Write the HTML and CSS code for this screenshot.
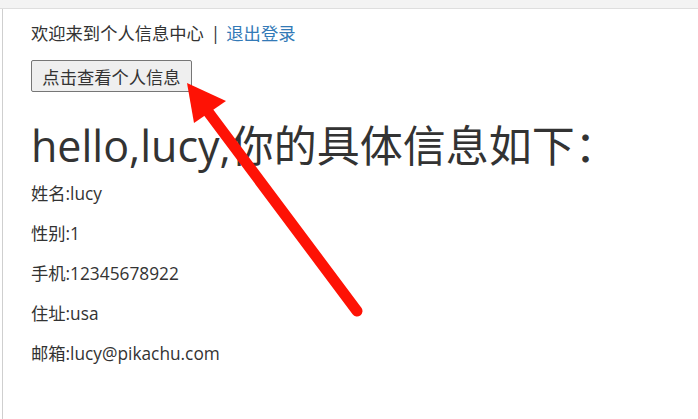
FILE: index.html
```html
<!DOCTYPE html>
<html>
<head>
<meta charset="utf-8">
<link rel="stylesheet" href="styles.css">
</head>
<body>
<div class="topbar"></div>
<div class="frame">
  <div class="content">
    <div class="welcome">欢迎来到个人信息中心<span class="sep">|</span><a class="link" href="#">退出登录</a></div>
    <button class="btn">点击查看个人信息</button>
    <h1 class="title">hello,lucy,你的具体信息如下：</h1>
    <p class="row">姓名:lucy</p>
    <p class="row">性别:1</p>
    <p class="row">手机:12345678922</p>
    <p class="row">住址:usa</p>
    <p class="row">邮箱:lucy@pikachu.com</p>
  </div>
  <svg class="arrow" width="698" height="419" viewBox="0 0 698 419">
    <line x1="357" y1="311" x2="203" y2="105" stroke="#fe1205" stroke-width="11" stroke-linecap="round"/>
    <polygon points="187,83 226,101 194,123" fill="#fe1205"/>
  </svg>
</div>
</body>
</html>
```
FILE: styles.css
```css
html, body {
  margin: 0;
  padding: 0;
  background: #fff;
}
body {
  font-family: "Open Sans", "Noto Sans CJK SC", sans-serif;
  font-size: 17.3px;
  line-height: 24px;
  color: #333;
  width: 698px;
  height: 419px;
  overflow: hidden;
}
.topbar {
  height: 8px;
  background: #f3f3f3;
  border-bottom: 1px solid #dedede;
}
.frame {
  margin-left: 2px;
  border-left: 1px solid #cfcfcf;
  height: 410px;
}
.content {
  padding: 13px 0 0 28px;
}
.welcome {
  height: 24px;
}
.sep {
  margin: 0 6px 0 7px;
}
.link {
  color: #337ab7;
  text-decoration: none;
}
.btn {
  margin-top: 14px;
  height: 32px;
  width: 161px;
  padding: 0;
  font-family: "Open Sans", "Noto Sans CJK SC", sans-serif;
  font-size: 17.3px;
  color: #333;
  background: #efefef;
  border: 1px solid #767676;
  border-radius: 2px;
  display: block;
}
.title {
  margin: 31px 0 13px;
  font-size: 43px;
  line-height: 46px;
  font-weight: 400;
}
.row {
  margin: 0 0 16px;
}
.arrow {
  position: absolute;
  left: 0;
  top: 0;
  pointer-events: none;
}
```
